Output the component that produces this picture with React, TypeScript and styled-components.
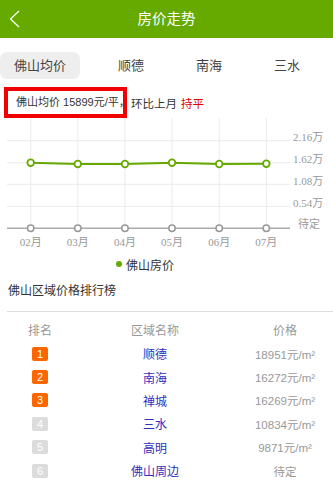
import React from "react";
import styled, { createGlobalStyle } from "styled-components";

const Global = createGlobalStyle`
  html, body { margin: 0; padding: 0; background: #fff; }
  body { font-family: "Liberation Sans", "Noto Sans CJK SC", sans-serif; color: #333; }
  * { box-sizing: border-box; }
`;

const Page = styled.div`
  width: 333px;
  height: 499px;
  overflow: hidden;
  background: #fff;
`;

const Header = styled.header`
  height: 38px;
  background: #66aa00;
  display: grid;
  grid-template-columns: 40px 1fr 40px;
  align-items: center;
`;

const BackBtn = styled.div`
  display: flex;
  align-items: center;
  padding-left: 9px;
  height: 38px;
`;

const Title = styled.h1`
  margin: 0;
  font-size: 14.5px;
  font-weight: normal;
  color: #fff;
  text-align: center;
  line-height: 38px;
`;

const Tabs = styled.nav`
  display: flex;
  gap: 24px;
  padding-top: 14px;
`;

const Tab = styled.div<{ $active?: boolean }>`
  height: 27px;
  line-height: 27px;
  padding: 0 14px;
  font-size: 13px;
  color: #444;
  border-radius: 7px;
  background: ${(p) => (p.$active ? "#eeeeee" : "transparent")};
  white-space: nowrap;
`;

const Summary = styled.div`
  display: flex;
  align-items: center;
  margin-top: 8px;
  padding-left: 4px;
  font-size: 11.5px;
  color: #333;
  white-space: nowrap;
`;

const Highlight = styled.span`
  display: inline-block;
  flex: 0 0 123px;
  width: 123px;
  height: 31px;
  line-height: 23px;
  border: 4px solid #f00000;
  padding-left: 8px;
  font-size: 11px;
  white-space: nowrap;
  overflow: visible;
`;

const Trend = styled.span`
  margin-left: 4px;
`;

const Flat = styled.span`
  color: #e00000;
  margin-left: 4px;
`;

const ChartSvg = styled.svg`
  display: block;
`;

const Legend = styled.div`
  width: 290px;
  height: 24px;
  display: flex;
  justify-content: center;
  align-items: center;
  gap: 4px;
  font-size: 12px;
  color: #333;
`;

const Dot = styled.span`
  width: 6px;
  height: 6px;
  border-radius: 50%;
  background: #66aa00;
`;

const SectionTitle = styled.h2`
  margin: 0;
  padding-left: 8px;
  height: 30px;
  line-height: 30px;
  font-size: 12px;
  font-weight: normal;
  color: #333;
`;

const Divider = styled.div`
  margin: 5px 0 0 7px;
  height: 1px;
  background: #dddddd;
`;

const Grid = styled.div`
  margin-left: 7px;
  display: grid;
  grid-template-columns: 66px 164px 96px;
`;

const HeadCell = styled.div`
  padding-top: 10px;
  height: 30px;
  line-height: 18px;
  font-size: 12px;
  color: #999;
  text-align: center;
`;

const Cell = styled.div`
  height: 23.4px;
  display: flex;
  align-items: center;
  justify-content: center;
  font-size: 12px;
`;

const Badge = styled.span<{ $top: boolean }>`
  width: 16px;
  height: 14px;
  border-radius: 2px;
  background: ${(p) => (p.$top ? "#ff6600" : "#dcdcdc")};
  color: #fff;
  font-size: 11px;
  line-height: 14px;
  text-align: center;
`;

const Name = styled.span`
  color: #2f2fc0;
`;

const Price = styled.span`
  color: #999;
  font-size: 11.5px;
`;

const months = ["02月", "03月", "04月", "05月", "06月", "07月"];
const xs = [30.7, 77.8, 125, 172, 219.2, 266.3];
const greenY = [44.7, 46, 46, 44.7, 46, 45.7];
const gridY = [22.7, 44.7, 66.3, 88.3];
const yLabels = ["2.16万", "1.62万", "1.08万", "0.54万"];
const axisY = 110.3;

const ranks = [
  { n: 1, name: "顺德", price: "18951元/m²" },
  { n: 2, name: "南海", price: "16272元/m²" },
  { n: 3, name: "禅城", price: "16269元/m²" },
  { n: 4, name: "三水", price: "10834元/m²" },
  { n: 5, name: "高明", price: "9871元/m²" },
  { n: 6, name: "佛山周边", price: "待定" },
];

function Chart() {
  const serif = '"Liberation Serif", "Noto Sans CJK SC", serif';
  return (
    <ChartSvg width={333} height={134} viewBox="0 0 333 134">
      {xs.map((x) => (
        <line key={x} x1={x} y1={0} x2={x} y2={axisY} stroke="#ebebeb" strokeWidth={1} />
      ))}
      {gridY.map((y) => (
        <line key={y} x1={7} y1={y} x2={290} y2={y} stroke="#ebebeb" strokeWidth={1} />
      ))}
      {yLabels.map((t, i) => (
        <text key={t} x={293} y={gridY[i] + 0.5} fontSize={11} fill="#999" fontFamily={serif}>
          {t}
        </text>
      ))}
      <text x={298} y={axisY} fontSize={11} fill="#999" fontFamily={serif}>
        待定
      </text>
      <line x1={7} y1={axisY} x2={290} y2={axisY} stroke="#aaaaaa" strokeWidth={1.5} />
      {xs.map((x) => (
        <circle key={"g" + x} cx={x} cy={axisY} r={3.2} fill="#fff" stroke="#999" strokeWidth={1.5} />
      ))}
      <polyline
        points={xs.map((x, i) => `${x},${greenY[i]}`).join(" ")}
        fill="none"
        stroke="#66aa00"
        strokeWidth={2}
      />
      {xs.map((x, i) => (
        <circle key={"c" + x} cx={x} cy={greenY[i]} r={3.3} fill="#fff" stroke="#66aa00" strokeWidth={1.8} />
      ))}
      {months.map((m, i) => (
        <text key={m} x={xs[i]} y={127.5} fontSize={11} fill="#999" textAnchor="middle" fontFamily={serif}>
          {m}
        </text>
      ))}
    </ChartSvg>
  );
}

export default function App() {
  return (
    <Page>
      <Global />
      <Header>
        <BackBtn>
          <svg width="12" height="20" viewBox="0 0 12 20">
            <polyline points="10,2 1.5,10 10,18" fill="none" stroke="#fff" strokeWidth="1.2" />
          </svg>
        </BackBtn>
        <Title>房价走势</Title>
        <div />
      </Header>
      <Tabs>
        <Tab $active>佛山均价</Tab>
        <Tab>顺德</Tab>
        <Tab>南海</Tab>
        <Tab>三水</Tab>
      </Tabs>
      <Summary>
        <Highlight>佛山均价 15899元/平，</Highlight>
        <Trend>环比上月</Trend>
        <Flat>持平</Flat>
      </Summary>
      <Chart />
      <Legend>
        <Dot />
        <span>佛山房价</span>
      </Legend>
      <SectionTitle>佛山区域价格排行榜</SectionTitle>
      <Divider />
      <Grid>
        <HeadCell>排名</HeadCell>
        <HeadCell>区域名称</HeadCell>
        <HeadCell>价格</HeadCell>
        {ranks.map((r) => (
          <React.Fragment key={r.n}>
            <Cell>
              <Badge $top={r.n <= 3}>{r.n}</Badge>
            </Cell>
            <Cell>
              <Name>{r.name}</Name>
            </Cell>
            <Cell>
              <Price>{r.price}</Price>
            </Cell>
          </React.Fragment>
        ))}
      </Grid>
    </Page>
  );
}
